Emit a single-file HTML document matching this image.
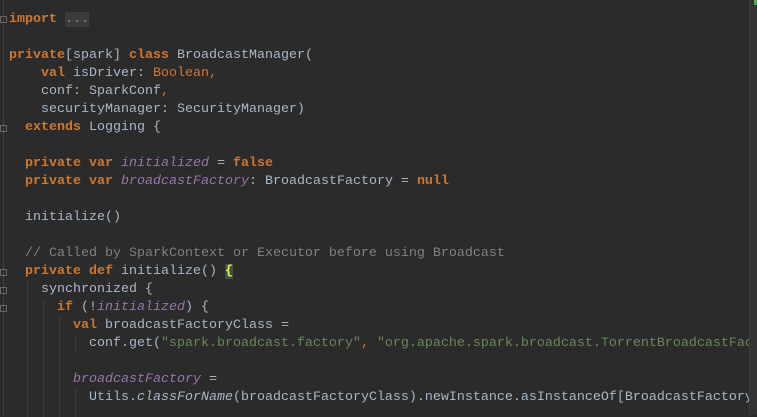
<!DOCTYPE html>
<html><head><style>
body{margin:0;width:757px;height:415px;background:#2b2b2b;overflow:hidden;position:relative;font-family:"Liberation Mono",monospace;font-size:13.33px;}
#code{position:absolute;left:9px;top:11px;width:740px;overflow:hidden;white-space:pre;color:#a9b7c6;line-height:18px;}
.k{color:#cc7832;font-weight:bold}
.t{color:#cc7832}
.s{color:#6a8759}
.c{color:#808080}
.f{color:#9876aa;font-style:italic}
.i{font-style:italic}
.fold{background:#3b3b3b;color:#8a8a8a}
.br{background:#3b514d;color:#ffef28;font-weight:bold}
#gut{position:absolute;left:3px;top:0;height:415px;border-left:1px dotted #555}
#rm{position:absolute;left:749px;top:0;width:8px;height:415px;background:#313335;border-left:1px solid #3a3a3a}
#mk{position:absolute;left:754px;top:0;width:3px;height:5px;background:#4caf50}
.g{position:absolute;width:1px;background:#3c3c3c}
.fi{position:absolute;left:0;width:7px;height:7px;border:1px solid #666;box-sizing:border-box}
</style></head><body>
<div id="gut"></div>
<div class="g" style="left:27px;top:281px;height:136px"></div>
<div class="g" style="left:43px;top:299px;height:118px"></div>
<div class="g" style="left:59px;top:317px;height:100px"></div>
<div class="g" style="left:75px;top:335px;height:18px"></div>
<div class="g" style="left:75px;top:389px;height:28px"></div>
<div class="fi" style="top:16px"></div>
<div class="fi" style="top:125px"></div>
<div class="fi" style="top:269px"></div>
<div class="fi" style="top:287px"></div>
<div class="fi" style="top:305px"></div>
<div id="rm"></div><div id="mk"></div>
<div id="code"><span class="k">import</span> <span class="fold">...</span>

<span class="k">private</span>[spark] <span class="k">class</span> BroadcastManager(
    <span class="k">val</span> isDriver: <span class="t">Boolean,</span>
    conf: SparkConf<span class="t">,</span>
    securityManager: SecurityManager)
  <span class="k">extends</span> Logging {

  <span class="k">private var</span> <span class="f">initialized</span> = <span class="k">false</span>
  <span class="k">private var</span> <span class="f">broadcastFactory</span>: BroadcastFactory = <span class="k">null</span>

  initialize()

  <span class="c">// Called by SparkContext or Executor before using Broadcast</span>
  <span class="k">private def</span> initialize() <span class="br">{</span>
    synchronized {
      <span class="k">if</span> (!<span class="f">initialized</span>) {
        <span class="k">val</span> broadcastFactoryClass =
          conf.get(<span class="s">"spark.broadcast.factory"</span><span class="t">,</span> <span class="s">"org.apache.spark.broadcast.TorrentBroadcastFactory"</span>)

        <span class="f">broadcastFactory</span> =
          Utils.<span class="i">classForName</span>(broadcastFactoryClass).newInstance.asInstanceOf[BroadcastFactory]
</div>
</body></html>
